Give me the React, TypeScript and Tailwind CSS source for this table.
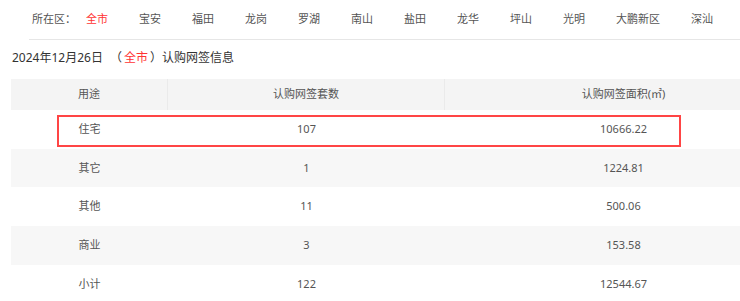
const districts = [
  "全市",
  "宝安",
  "福田",
  "龙岗",
  "罗湖",
  "南山",
  "盐田",
  "龙华",
  "坪山",
  "光明",
  "大鹏新区",
  "深汕",
];

const rows = [
  { use: "住宅", count: "107", area: "10666.22" },
  { use: "其它", count: "1", area: "1224.81" },
  { use: "其他", count: "11", area: "500.06" },
  { use: "商业", count: "3", area: "153.58" },
  { use: "小计", count: "122", area: "12544.67" },
];

const App = () => {
  return (
    <div
      className="w-[740px] h-[301px] overflow-hidden bg-white relative"
      style={{ fontFamily: '"Noto Sans", "Noto Sans CJK SC", sans-serif' }}
    >
      {/* District tabs */}
      <div className="ml-[29px] h-[40px] border-b border-[#e6e6e6] flex items-center pl-[3px] text-[11px] text-[#555] whitespace-nowrap">
        <span>所在区：</span>
        <div className="flex ml-[10px] gap-[31px]">
          {districts.map((d, i) => (
            <span key={d} className={i === 0 ? "text-[#ff3333]" : ""}>
              {d}
            </span>
          ))}
        </div>
      </div>

      {/* Title */}
      <div className="pl-[12px] h-[34px] flex items-center pt-[1px] text-[12px] text-[#333] whitespace-nowrap">
        <span>2024年12月26日</span>
        <span className="ml-[7px]">（</span>
        <span className="text-[#ff3333] px-[2px]">全市</span>
        <span>）认购网签信息</span>
      </div>

      {/* Table */}
      <div className="ml-[11px] mt-[5px] w-[791px] text-[11px] text-[#555]">
        <div className="flex h-[31px] bg-[#f4f4f4] items-center">
          <div className="w-[156px] text-center">用途</div>
          <div className="w-[277px] h-full flex items-center justify-center border-l border-[#eaeaea]">
            认购网签套数
          </div>
          <div className="flex-1 h-full flex items-center justify-center border-l border-[#eaeaea]">
            认购网签面积(㎡)
          </div>
        </div>
        {rows.map((r, i) => (
          <div
            key={r.use}
            className={`flex h-[38.7px] items-center ${i % 2 === 1 ? "bg-[#f7f7f7]" : "bg-white"}`}
          >
            <div className="w-[157px] text-center">{r.use}</div>
            <div className="w-[277px] text-center">{r.count}</div>
            <div className="flex-1 text-center">{r.area}</div>
          </div>
        ))}
      </div>

      {/* Highlight annotation */}
      <div className="absolute left-[57px] top-[115px] w-[624px] h-[32px] border-2 border-[#ff4545] pointer-events-none" />
    </div>
  );
};

export default App;
